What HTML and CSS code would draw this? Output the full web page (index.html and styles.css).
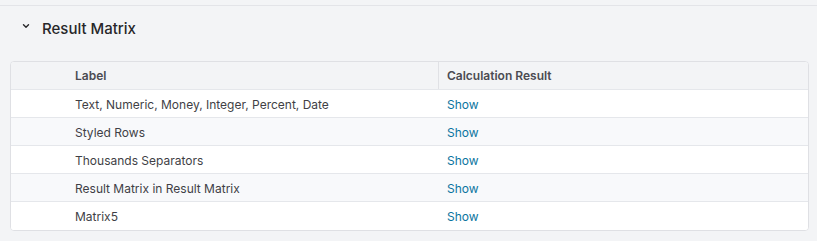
FILE: index.html
```html
<!DOCTYPE html>
<html>
<head>
<meta charset="utf-8">
<link rel="stylesheet" href="styles.css">
</head>
<body>
<div class="page">
  <section class="panel">
    <div class="panel-head">
      <svg class="chev" width="8" height="6" viewBox="0 0 8 6"><path d="M1.5 1.8 L4 4.2 L6.5 1.8" fill="none" stroke="#27272a" stroke-width="1.4" stroke-linecap="round" stroke-linejoin="round"/></svg>
      <h2 class="title">Result Matrix</h2>
    </div>
    <div class="matrix">
      <div class="row head">
        <div class="cell label">Label</div>
        <div class="cell result">Calculation Result</div>
      </div>
      <div class="row">
        <div class="cell label">Text, Numeric, Money, Integer, Percent, Date</div>
        <div class="cell result"><a class="link">Show</a></div>
      </div>
      <div class="row alt">
        <div class="cell label">Styled Rows</div>
        <div class="cell result"><a class="link">Show</a></div>
      </div>
      <div class="row">
        <div class="cell label">Thousands Separators</div>
        <div class="cell result"><a class="link">Show</a></div>
      </div>
      <div class="row alt">
        <div class="cell label">Result Matrix in Result Matrix</div>
        <div class="cell result"><a class="link">Show</a></div>
      </div>
      <div class="row last">
        <div class="cell label">Matrix5</div>
        <div class="cell result"><a class="link">Show</a></div>
      </div>
    </div>
  </section>
</div>
</body>
</html>
```
FILE: styles.css
```css
html, body {
  margin: 0;
  padding: 0;
  background: #f3f4f6;
  font-family: Inter, "Noto Sans", sans-serif;
  color: #3f3f46;
}
.page {
  padding-top: 5px;
}
.panel {
  border-top: 1px solid #e3e4e8;
  padding: 0 8px 0 10px;
}
.panel-head {
  display: flex;
  align-items: center;
  height: 44px;
  padding-left: 12px;
  margin-bottom: 11px;
}
.chev {
  display: block;
  margin-top: -4px;
}
.title {
  margin: 0 0 0 12px;
  font-size: 15px;
  font-weight: 500;
  color: #27272a;
}
.matrix {
  border: 1px solid #dfe0e4;
  border-radius: 4px;
  background: #fff;
  overflow: hidden;
}
.row {
  box-sizing: border-box;
  display: grid;
  grid-template-columns: 427px 1fr;
  height: 28px;
  padding-top: 1px;
  border-bottom: 1px solid #e5e7eb;
  font-size: 12px;
  background: #fff;
}
.row.alt {
  background: #f8f9fb;
}
.row.last {
  border-bottom: none;
}
.row.head {
  background: #f3f4f6;
  font-weight: 600;
  font-size: 12px;
  color: #4b4b52;
  padding-top: 0;
}
.cell {
  display: flex;
  align-items: center;
}
.label {
  padding-left: 64px;
}
.result {
  padding-left: 9px;
}
.head .result {
  border-left: 1px solid #e0e1e5;
  padding-left: 8px;
}
.link {
  color: #0b75a0;
  cursor: pointer;
}
```
